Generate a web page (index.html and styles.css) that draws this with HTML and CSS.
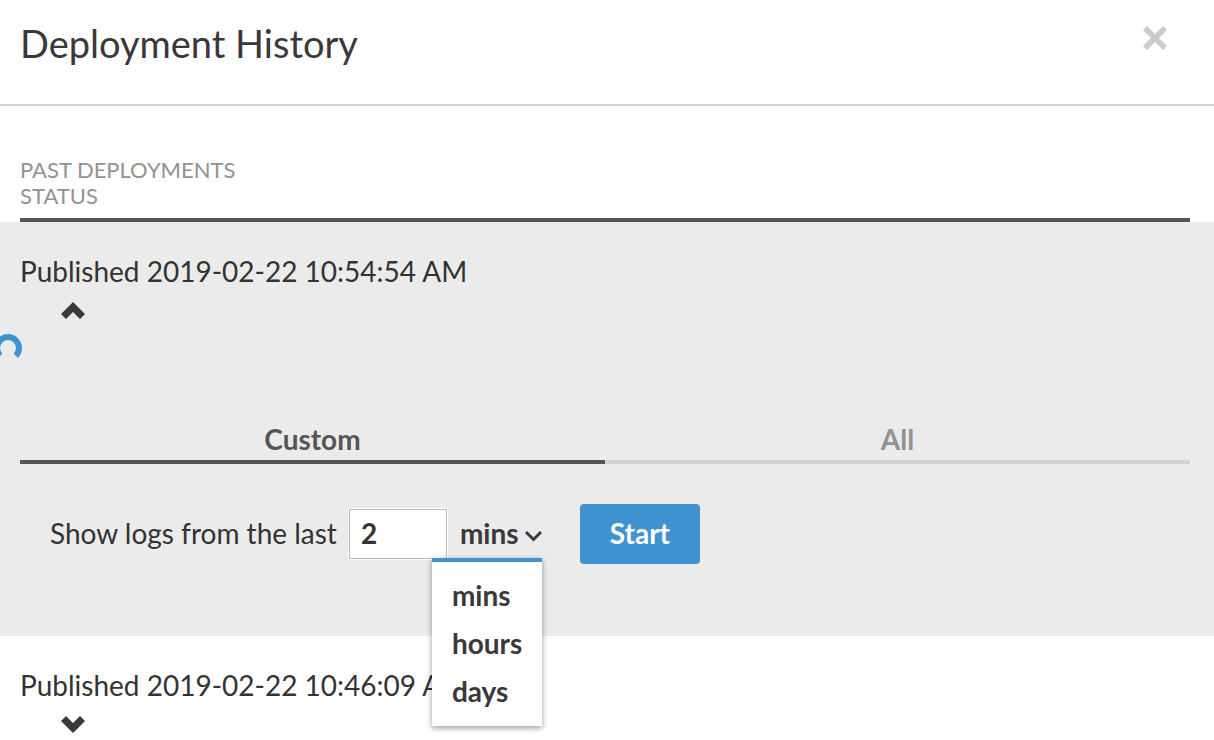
FILE: index.html
```html
<!DOCTYPE html>
<html lang="en">

<head>
    <meta charset="UTF-8">
    <meta name="viewport" content="width=device-width, initial-scale=1.0">
    <title>Deployment History</title>
    <link rel="stylesheet" href="styles.css">
</head>

<body>
    <header class="header">
        <h1>Deployment History</h1>
        <button type="button" class="close" aria-label="Close">
            <svg width="24" height="24" viewBox="0 0 24 24"><path d="M4 0L12 8L20 0L24 4L16 12L24 20L20 24L12 16L4 24L0 20L8 12L0 4Z" fill="#ccc"/></svg>
        </button>
    </header>

    <main>
        <div class="list-head">
            <div>PAST DEPLOYMENTS</div>
            <div>STATUS</div>
        </div>

        <section class="deployment open">
            <h2>Published 2019-02-22 10:54:54 AM</h2>
            <button type="button" class="toggle" aria-label="Collapse" aria-expanded="true">
                <svg width="24" height="17" viewBox="0 0 24 17"><path d="M12 0L24 12L19 17L12 10L5 17L0 12Z" fill="#3a383b"/></svg>
            </button>

            <div class="spinner">
                <svg width="24" height="28" viewBox="0 0 24 28"><path d="M0.2 21.8A11 11 0 1 1 15.8 21.8" fill="none" stroke="#3f93ce" stroke-width="6"/></svg>
            </div>

            <div class="tabs" role="tablist">
                <button type="button" class="tab active" role="tab" aria-selected="true">Custom</button>
                <button type="button" class="tab" role="tab" aria-selected="false">All</button>
            </div>

            <form class="log-form">
                <label for="amount">Show logs from the last</label>
                <input type="text" id="amount" name="amount" value="2">
                <div class="unit">
                    <select id="unit" name="unit" aria-label="Time unit">
                        <option>mins</option>
                        <option>hours</option>
                        <option>days</option>
                    </select>
                    <svg class="arrow" width="18" height="12" viewBox="0 0 18 12"><path d="M2 2L9.5 9.5L17 2" fill="none" stroke="#3a383b" stroke-width="3"/></svg>
                    <ul class="menu">
                        <li>mins</li>
                        <li>hours</li>
                        <li>days</li>
                    </ul>
                </div>
                <button type="submit" class="start">Start</button>
            </form>
        </section>

        <section class="deployment">
            <h2>Published 2019-02-22 10:46:09 AM</h2>
            <button type="button" class="toggle" aria-label="Expand" aria-expanded="false">
                <svg width="24" height="17" viewBox="0 0 24 17"><path d="M5 0L12 7L19 0L24 5L12 17L0 5Z" fill="#3a383b"/></svg>
            </button>
        </section>
    </main>

    <script>
        // pick a unit from the open menu
        document.querySelectorAll('.menu li').forEach(function (item) {
            item.addEventListener('click', function () {
                document.getElementById('unit').value = item.textContent;
            });
        });

        document.querySelector('.log-form').addEventListener('submit', function (event) {
            event.preventDefault();
        });
    </script>
</body>

</html>
```

FILE: styles.css
```css
* {
    box-sizing: border-box;
}

body {
    margin: 0;
    font-family: Lato, "Liberation Sans", sans-serif;
    font-size: 28px;
    line-height: 34px;
    color: #333;
    background: #fff;
    overflow-x: hidden;
}

button, input, select {
    font: inherit;
    color: inherit;
}

button {
    padding: 0;
    border: none;
    background: none;
    cursor: pointer;
}

svg {
    display: block;
}

.header {
    display: flex;
    justify-content: space-between;
    align-items: flex-start;
    padding: 19px 47px 37px 20px;
    border-bottom: 2px solid #d0d0d0;
}

.header h1 {
    margin: 0;
    font-size: 38px;
    font-weight: 400;
    line-height: 48px;
    color: #3a383b;
}

.close {
    margin-top: 7px;
}

.list-head {
    margin: 51px 24px 0 20px;
    padding-bottom: 9px;
    border-bottom: 4px solid #555;
    font-size: 22px;
    line-height: 26px;
    color: #929292;
}

.deployment {
    padding: 32px 24px 0 20px;
}

.deployment.open {
    padding-bottom: 72px;
    background: #ebebeb;
}

.deployment h2 {
    margin: 0;
    font-size: 28px;
    font-weight: 400;
}

.toggle {
    display: block;
    margin: 14px 0 0 41px;
}

.spinner {
    margin: 15px 0 0 -20px;
}

.tabs {
    display: flex;
    margin-top: 60px;
}

.tab {
    flex: 1;
    padding-bottom: 4px;
    border-bottom: 4px solid #d1d2d3;
    font-weight: 700;
    color: #929292;
}

.tab.active {
    border-color: #555;
    color: #555;
}

.log-form {
    display: flex;
    align-items: center;
    margin: 40px 0 0 30px;
}

.log-form label {
    padding-bottom: 2px;
}

.log-form input {
    width: 98px;
    height: 50px;
    margin: 0 13px 0 12px;
    padding: 0 11px 2px;
    border: 1px solid #bbb;
    outline: 1px solid #fff;
    background: #fff;
    font-weight: 700;
}

.unit {
    position: relative;
    display: flex;
    align-items: center;
    margin-right: 38px;
    font-weight: 700;
    color: #3a383b;
}

.unit select {
    width: 82px;
    height: 50px;
    padding: 0 0 2px;
    border: none;
    background: none;
    appearance: none;
}

.arrow {
    position: absolute;
    right: 0;
    top: 21px;
    pointer-events: none;
}

.menu {
    position: absolute;
    top: 49px;
    right: 0;
    z-index: 1;
    width: 110px;
    margin: 0;
    padding: 9px 0 11px;
    border-top: 4px solid #3f93ce;
    background: #fff;
    box-shadow: 0 2px 6px rgba(0, 0, 0, 0.4);
    list-style: none;
    line-height: 48px;
}

.menu li {
    padding-left: 20px;
    cursor: pointer;
}

.start {
    width: 120px;
    height: 60px;
    padding-bottom: 2px;
    border-radius: 4px;
    background: #3f93ce;
    font-weight: 700;
    color: #fff;
}
```
